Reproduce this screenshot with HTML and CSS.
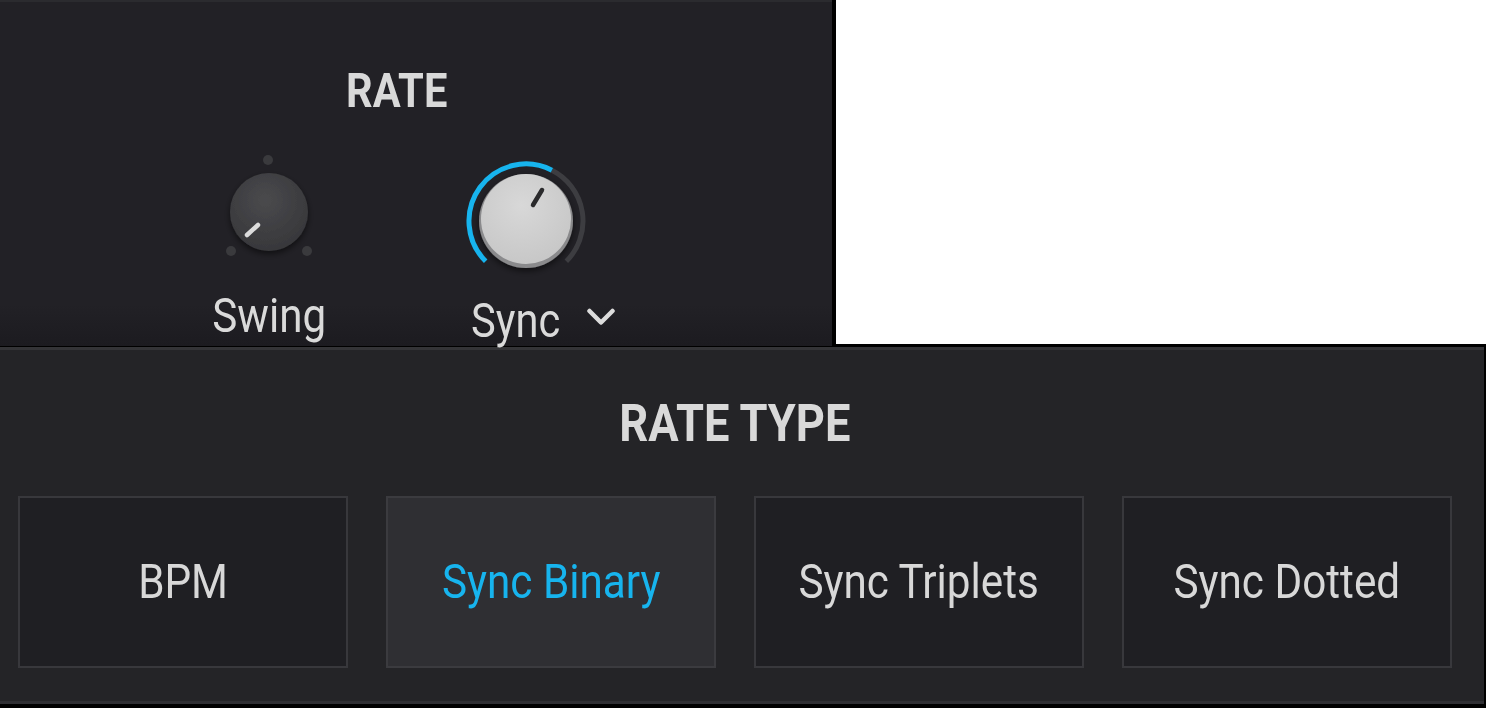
FILE: index.html
```html
<!DOCTYPE html>
<html lang="en">
<head>
<meta charset="utf-8">
<title>Rate</title>
<link rel="stylesheet" href="styles.css">
</head>
<body>
<div class="top">
  <section class="rate-panel">
    <h2 class="title rate-title"><span class="cond">RATE</span></h2>
    <div class="controls">
      <div class="ctl">
        <svg class="knob" width="140" height="130" viewBox="0 0 140 130">
          <defs>
            <radialGradient id="gDark" cx="45%" cy="35%" r="70%">
              <stop offset="0" stop-color="#4a4a4d"/>
              <stop offset="1" stop-color="#363639"/>
            </radialGradient>
            <filter id="sh" x="-30%" y="-30%" width="160%" height="160%">
              <feDropShadow dx="0" dy="3" stdDeviation="3" flood-color="#000" flood-opacity="0.55"/>
            </filter>
          </defs>
          <circle cx="69" cy="10" r="5" fill="#3a3a3d"/>
          <circle cx="32" cy="101" r="5" fill="#3a3a3d"/>
          <circle cx="108" cy="101" r="5" fill="#3a3a3d"/>
          <circle cx="70" cy="62" r="39" fill="url(#gDark)" filter="url(#sh)"/>
          <line x1="48" y1="85" x2="59" y2="75" stroke="#dcdcdc" stroke-width="4.5" stroke-linecap="round"/>
        </svg>
        <div class="label"><span class="cond">Swing</span></div>
      </div>
      <div class="ctl">
        <svg class="knob" width="140" height="130" viewBox="0 0 140 130">
          <defs>
            <radialGradient id="gLight" cx="45%" cy="35%" r="70%">
              <stop offset="0" stop-color="#d8d8d8"/>
              <stop offset="1" stop-color="#c6c6c6"/>
            </radialGradient>
          </defs>
          <path d="M95.9 20.2 A57 57 0 0 1 110.3 111.3" fill="none" stroke="#3d3d41" stroke-width="5"/>
          <path d="M29.7 111.3 A57 57 0 0 1 95.9 20.2" fill="none" stroke="#17b4ee" stroke-width="5"/>
          <circle cx="70" cy="71" r="47" fill="#8a8a8c" filter="url(#sh)"/>
          <circle cx="70" cy="69" r="45" fill="url(#gLight)"/>
          <line x1="77" y1="55" x2="86" y2="40" stroke="#2a2a2c" stroke-width="4.5" stroke-linecap="round"/>
        </svg>
        <div class="label sync-label">
          <span class="cond left">Sync</span>
          <svg class="chev" width="28" height="20" viewBox="0 0 28 20">
            <polyline points="2.5,3 14,14.5 25.5,3" fill="none" stroke="#dcdcdc" stroke-width="4.5" stroke-linecap="round" stroke-linejoin="round"/>
          </svg>
        </div>
      </div>
    </div>
  </section>
  <div class="blank"></div>
</div>
<section class="type-panel">
  <h2 class="title type-title"><span class="cond">RATE TYPE</span></h2>
  <div class="buttons">
    <button class="opt"><span class="cond">BPM</span></button>
    <button class="opt active"><span class="cond">Sync Binary</span></button>
    <button class="opt"><span class="cond">Sync Triplets</span></button>
    <button class="opt"><span class="cond">Sync Dotted</span></button>
  </div>
</section>
</body>
</html>
```
FILE: styles.css
```css
* { box-sizing: border-box; }
html, body { margin: 0; padding: 0; }
body {
  background: #000;
  width: 1486px;
  height: 708px;
  overflow: hidden;
  font-family: Roboto, "Liberation Sans", sans-serif;
  color: #dadada;
}
.cond {
  display: inline-block;
  white-space: nowrap;
  transform: scaleX(0.86);
  transform-origin: center;
}
.cond.left { transform-origin: left center; width: 88px; transform: scaleX(0.85); }

.top {
  display: flex;
  height: 347px;
  background: #000;
}
.rate-panel {
  width: 832px;
  height: 346px;
  background: linear-gradient(#222126, #222126 88%, #1c1b20);
  border-top: 2px solid #2b2b2f;
  padding-top: 64px;
}
.blank {
  margin-left: 4px;
  flex: 1;
  height: 344px;
  background: #fff;
}
.title {
  margin: 0;
  font-weight: 700;
  line-height: 1;
  text-align: center;
  color: #d9d9d9;
}
.rate-title {
  font-size: 49px;
  padding-right: 38px;
}
.rate-title .cond { transform: scaleX(0.85); }
.controls {
  display: flex;
  gap: 117px;
  padding-left: 199px;
  margin-top: 35px;
}
.ctl {
  width: 140px;
  display: flex;
  flex-direction: column;
  align-items: center;
}
.knob { display: block; overflow: visible; }
.label {
  margin-top: 11px;
  font-size: 49px;
  line-height: 1;
  white-space: nowrap;
}
.sync-label {
  align-self: flex-start;
  margin-top: 16px;
  margin-left: 15px;
  display: flex;
  align-items: flex-start;
}
.chev {
  display: block;
  margin-left: 28px;
  margin-top: 12px;
}

.type-panel {
  width: 1484px;
  background: #242427;
  border-top: 3px solid #343437;
  border-bottom: 3px solid #2f2f33;
  padding: 48px 32px 33px 18px;
}
.type-title {
  font-size: 52px;
}
.type-title .cond { transform: scaleX(0.87); }
.buttons {
  display: flex;
  gap: 38px;
  margin-top: 46px;
}
.opt {
  width: 330px;
  height: 172px;
  background: #1f1f23;
  border: 2px solid #38383c;
  font-family: Roboto, "Liberation Sans", sans-serif;
  font-size: 48px;
  color: #d8d8d8;
  padding: 0;
  display: flex;
  align-items: center;
  justify-content: center;
  line-height: 1;
}
.opt .cond { transform: scaleX(0.88); }
.opt.active {
  background: #2f2f33;
  border-color: #3b3b3f;
  color: #17b4ee;
}
```
